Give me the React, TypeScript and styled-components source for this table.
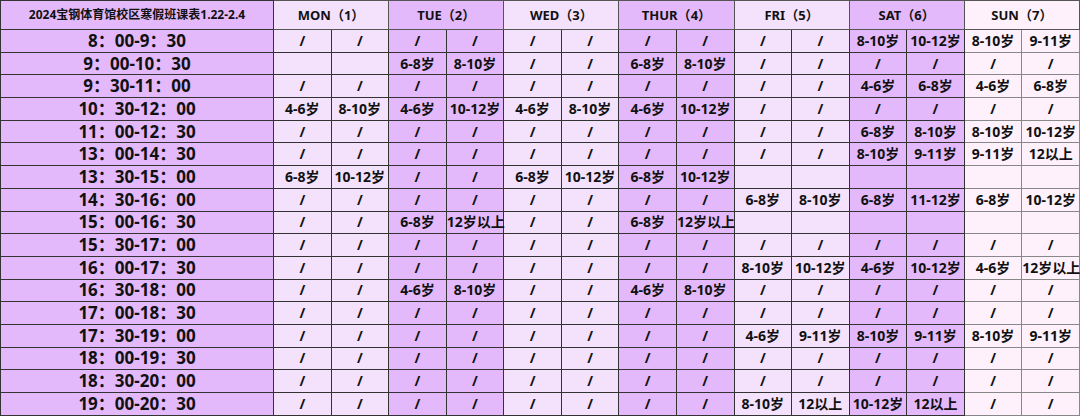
import React from "react";
import styled, { createGlobalStyle } from "styled-components";

const GlobalStyle = createGlobalStyle`
  html, body {
    margin: 0;
    padding: 0;
    background: #ffffff;
  }
  body {
    font-family: "Noto Sans", "Noto Sans CJK SC", sans-serif;
  }
`;

type Tone = "time" | "light" | "dark" | "pale";

const tones: Record<Tone, string> = {
  time: "#e4b9fb",
  light: "#f4e1fc",
  dark: "#e4b9fb",
  pale: "#fef1fc",
};

const Table = styled.table`
  width: 1080px;
  border-collapse: collapse;
  table-layout: fixed;
  color: #111;
  font-weight: 700;
`;

const HeadRow = styled.tr`
  height: 29px;
`;

const Row = styled.tr`
  height: 22.7px;
`;

const TitleCell = styled.th`
  background: ${tones.time};
  border: 1px solid #333;
  font-size: 12px;
  font-weight: 700;
  padding: 0 0 2px;
  text-align: center;
  white-space: nowrap;
`;

const DayCell = styled.th<{ $tone: Tone }>`
  background: ${(p) => tones[p.$tone]};
  border: 1px solid #555;
  font-size: 13px;
  font-weight: 700;
  padding: 0 0 2px;
  text-align: center;
  white-space: nowrap;
`;

const TimeCell = styled.td`
  background: ${tones.time};
  border: 1px solid #333;
  font-size: 17px;
  line-height: 20px;
  padding: 0;
  text-align: center;
  white-space: nowrap;
`;

const Cell = styled.td<{ $tone: Tone }>`
  background: ${(p) => tones[p.$tone]};
  border: 1px solid ${(p) => (p.$tone === "pale" ? "#888" : "#333")};
  font-size: 14px;
  line-height: 18px;
  padding: 0;
  text-align: center;
  white-space: nowrap;
  overflow: visible;
`;

const days: { name: string; n: number; tone: Tone }[] = [
  { name: "MON", n: 1, tone: "light" },
  { name: "TUE", n: 2, tone: "dark" },
  { name: "WED", n: 3, tone: "light" },
  { name: "THUR", n: 4, tone: "dark" },
  { name: "FRI", n: 5, tone: "light" },
  { name: "SAT", n: 6, tone: "dark" },
  { name: "SUN", n: 7, tone: "pale" },
];

// "_" marks an empty cell
const rows: [string, string][] = [
  ["8：00-9：30", "/ / / / / / / / / / 8-10岁 10-12岁 8-10岁 9-11岁"],
  ["9：00-10：30", "_ _ 6-8岁 8-10岁 / / 6-8岁 8-10岁 / / / / / /"],
  ["9：30-11：00", "/ / / / / / / / / / 4-6岁 6-8岁 4-6岁 6-8岁"],
  ["10：30-12：00", "4-6岁 8-10岁 4-6岁 10-12岁 4-6岁 8-10岁 4-6岁 10-12岁 / / / / / /"],
  ["11：00-12：30", "/ / / / / / / / / / 6-8岁 8-10岁 8-10岁 10-12岁"],
  ["13：00-14：30", "/ / / / / / / / / / 8-10岁 9-11岁 9-11岁 12以上"],
  ["13：30-15：00", "6-8岁 10-12岁 / / 6-8岁 10-12岁 6-8岁 10-12岁 _ _ _ _ _ _"],
  ["14：30-16：00", "/ / / / / / / / 6-8岁 8-10岁 6-8岁 11-12岁 6-8岁 10-12岁"],
  ["15：00-16：30", "/ / 6-8岁 12岁以上 / / 6-8岁 12岁以上 _ _ _ _ _ _"],
  ["15：30-17：00", "/ / / / / / / / / / / / / /"],
  ["16：00-17：30", "/ / / / / / / / 8-10岁 10-12岁 4-6岁 10-12岁 4-6岁 12岁以上"],
  ["16：30-18：00", "/ / 4-6岁 8-10岁 / / 4-6岁 8-10岁 / / / / / /"],
  ["17：00-18：30", "/ / / / / / / / / / / / / /"],
  ["17：30-19：00", "/ / / / / / / / 4-6岁 9-11岁 8-10岁 9-11岁 8-10岁 9-11岁"],
  ["18：00-19：30", "/ / / / / / / / / / / / / /"],
  ["18：30-20：00", "/ / / / / / / / / / / / / /"],
  ["19：00-20：30", "/ / / / / / / / 8-10岁 12以上 10-12岁 12以上 / /"],
];

const App = () => {
  return (
    <>
      <GlobalStyle />
      <Table>
        <colgroup>
          <col style={{ width: 273 }} />
          {Array.from({ length: 14 }).map((_, i) => (
            <col key={i} />
          ))}
        </colgroup>
        <thead>
          <HeadRow>
            <TitleCell>2024宝钢体育馆校区寒假班课表1.22-2.4</TitleCell>
            {days.map((d) => (
              <DayCell key={d.name} colSpan={2} $tone={d.tone}>
                {d.name}（{d.n}）
              </DayCell>
            ))}
          </HeadRow>
        </thead>
        <tbody>
          {rows.map(([time, cells]) => (
            <Row key={time}>
              <TimeCell>{time}</TimeCell>
              {cells.split(" ").map((c, i) => (
                <Cell key={i} $tone={days[Math.floor(i / 2)].tone}>
                  {c === "_" ? "" : c}
                </Cell>
              ))}
            </Row>
          ))}
        </tbody>
      </Table>
    </>
  );
};

export default App;
